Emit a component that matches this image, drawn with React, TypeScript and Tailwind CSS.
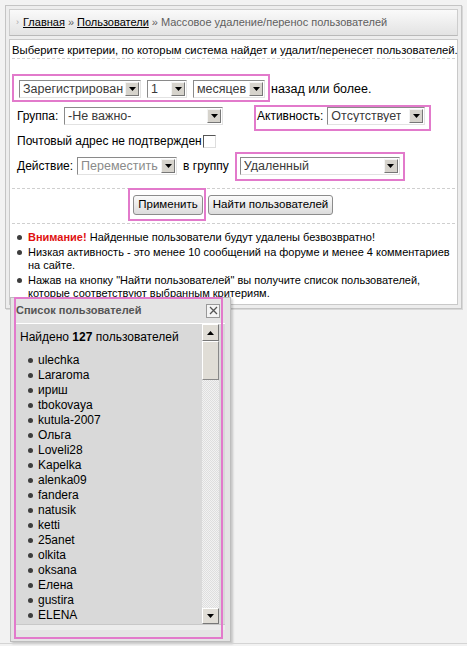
import React from 'react';

const users = [
  'ulechka', 'Lararoma', 'ириш', 'tbokovaya', 'kutula-2007', 'Ольга', 'Loveli28', 'Kapelka',
  'alenka09', 'fandera', 'natusik', 'ketti', '25anet', 'olkita', 'oksana', 'Елена', 'gustira',
  'ELENA', 'Murochka',
];

const font = { fontFamily: '"Liberation Sans", Arial, sans-serif' };

function Arrow({ up = false }: { up?: boolean }) {
  return (
    <svg width="7" height="4" viewBox="0 0 7 4">
      {up ? <path d="M0 4 L3.5 0 L7 4 Z" fill="#000" /> : <path d="M0 0 L7 0 L3.5 4 Z" fill="#000" />}
    </svg>
  );
}

function DropButton() {
  return (
    <div className="flex h-[14px] w-[14px] shrink-0 items-center justify-center border border-t-[#f4f4f4] border-l-[#f4f4f4] border-r-[#777] border-b-[#777] bg-[#d6d3cc]">
      <Arrow />
    </div>
  );
}

function Select({ value, className, muted = false }: { value: string; className: string; muted?: boolean }) {
  return (
    <div
      className={`flex h-[18px] shrink-0 items-center justify-between border border-t-[#8a8a8a] border-l-[#8a8a8a] border-r-[#e2e2e2] border-b-[#e2e2e2] bg-white pl-[3px] pr-[1px] text-[12.5px] ${muted ? 'text-[#8a8a8a]' : 'text-[#3a3a3a]'} ${className}`}
    >
      <span className="truncate leading-none">{value}</span>
      <DropButton />
    </div>
  );
}

function Button({ children, className }: { children: React.ReactNode; className: string }) {
  return (
    <button
      className={`flex h-[20px] shrink-0 items-center justify-center rounded-[3px] border border-[#8c8c8c] bg-gradient-to-b from-[#fbfbfb] to-[#dcdcdc] text-[11.5px] text-black ${className}`}
    >
      {children}
    </button>
  );
}

function Dashed() {
  return <div className="mx-[1px] border-t border-dashed border-[#cfcfcf]" />;
}

function Dot({ className }: { className: string }) {
  return <span className={`inline-block h-[5px] w-[5px] shrink-0 rounded-full bg-[#3d3d3d] ${className}`} />;
}

export default function App() {
  return (
    <div className="relative h-[646px] w-[467px] overflow-hidden bg-[#f2f2f2] text-black" style={font}>
      {/* outer frame */}
      <div className="mx-[5px] mt-[5px] border border-[#c4c4c4] bg-[#ededed] p-[3px] shadow-[1px_1px_0_#d8d8d8]">
        {/* breadcrumb */}
        <div className="flex h-[27px] items-center whitespace-nowrap border border-[#cdcdcd] border-b-[#b9b9b9] bg-gradient-to-b from-[#fafafa] to-[#e3e3e3] pl-[6px] text-[11px] text-[#606060]">
          <span className="mr-[4px] text-[9px] text-[#aaa]">›</span>
          <span className="text-black underline">Главная</span>
          <span className="mx-[3px]">»</span>
          <span className="text-black underline">Пользователи</span>
          <span className="mx-[3px]">»</span>
          <span>Массовое удаление/перенос пользователей</span>
        </div>

        {/* content */}
        <div className="mt-[3px] h-[266px] border border-[#c9c9c9] bg-white px-[1px]">
          <div className="whitespace-nowrap pl-[1px] pt-[4px] text-[11.3px] leading-[13px]">
            Выберите критерии, по которым система найдет и удалит/перенесет пользователей.
          </div>
          <div className="mt-[1px]">
            <Dashed />
          </div>

          <div className="flex flex-col whitespace-nowrap pl-[6px] text-[12px]">
            {/* row 1 */}
            <div className="mt-[21px] flex h-[18px] items-center">
              <div className="relative flex items-center gap-[6px] pl-[2px]">
                <div className="pointer-events-none absolute -bottom-[4px] -left-[5px] -right-[5px] -top-[6px] border-2 border-[#e27acb]" />
                <Select value="Зарегистрирован" className="w-[122px]" />
                <Select value="1" className="w-[40px]" />
                <Select value="месяцев" className="w-[72px]" />
              </div>
              <span className="ml-[6px] text-[12.5px]">назад или более.</span>
            </div>

            {/* row 2 */}
            <div className="mt-[9px] flex h-[18px] items-center">
              <span className="w-[47px]">Группа:</span>
              <Select value="-Не важно-" className="w-[159px]" />
              <div className="relative ml-[34px] flex items-center">
                <div className="pointer-events-none absolute -bottom-[6px] -left-[3px] -right-[6px] -top-[2px] border-2 border-[#e27acb]" />
                <span className="mr-[4px]">Активность:</span>
                <Select value="Отсутствует" className="w-[98px]" />
              </div>
            </div>

            {/* row 3 */}
            <div className="mt-[7px] flex h-[18px] items-center">
              <span>Почтовый адрес не подтвержден</span>
              <span className="ml-[1px] inline-block h-[13px] w-[13px] border border-t-[#555] border-l-[#555] border-r-[#ddd] border-b-[#ddd] bg-white" />
            </div>

            {/* row 4 */}
            <div className="mt-[7px] flex h-[18px] items-center">
              <span className="mr-[4px]">Действие:</span>
              <Select value="Переместить" className="w-[100px]" muted />
              <span className="ml-[6px] mr-[11px]">в группу</span>
              <div className="relative flex items-center">
                <div className="pointer-events-none absolute -bottom-[6px] -left-[5px] -right-[5px] -top-[5px] border-2 border-[#e27acb]" />
                <Select value="Удаленный" className="w-[160px]" />
              </div>
            </div>
          </div>

          <div className="mt-[13px]">
            <Dashed />
          </div>

          {/* buttons */}
          <div className="mt-[6px] flex h-[20px] items-center gap-[5px] pl-[122px]">
            <div className="relative">
              <div className="pointer-events-none absolute -bottom-[6px] -left-[5px] -right-[3px] -top-[7px] border-2 border-[#e27acb]" />
              <Button className="w-[70px]">Применить</Button>
            </div>
            <Button className="w-[125px]">Найти пользователей</Button>
          </div>

          <div className="mt-[8px]">
            <Dashed />
          </div>

          {/* notes */}
          <ul className="mt-[7px] flex flex-col gap-[2px] pl-[6px] text-[11px] leading-[13px]">
            <li className="flex">
              <Dot className="mr-[6px] mt-[4px]" />
              <span>
                <b className="text-[#e01010]">Внимание!</b> Найденные пользователи будут удалены безвозвратно!
              </span>
            </li>
            <li className="flex">
              <Dot className="mr-[6px] mt-[4px]" />
              <span>Низкая активность - это менее 10 сообщений на форуме и менее 4 комментариев на сайте.</span>
            </li>
            <li className="flex">
              <Dot className="mr-[6px] mt-[4px]" />
              <span>Нажав на кнопку "Найти пользователей" вы получите список пользователей, которые соответствуют выбранным критериям.</span>
            </li>
          </ul>
        </div>
      </div>

      {/* users popup */}
      <div className="absolute left-[10px] top-[297px] h-[345px] w-[221px] border border-[#bdbdbd] bg-[#e4e4e4] shadow-[2px_2px_2px_rgba(0,0,0,0.18)]">
        <div className="pointer-events-none absolute -top-[1px] bottom-[2px] left-[3px] right-[7px] z-10 border-2 border-[#e27acb]" />
        <div className="flex h-[25px] items-center justify-between pl-[5px] pr-[10px]">
          <span className="text-[11px] font-bold text-[#555]">Список пользователей</span>
          <span className="flex h-[14px] w-[14px] items-center justify-center border border-[#999] bg-[#f4f4f4]">
            <svg width="9" height="9" viewBox="0 0 9 9">
              <path d="M1 1 L8 8 M8 1 L1 8" stroke="#555" strokeWidth="1.3" />
            </svg>
          </span>
        </div>
        <div className="mx-[5px] h-[306px] border-t border-white bg-[#d9d9d9]">
          <div className="flex h-[300px]">
            <div className="flex-1 overflow-hidden pl-[4px]">
              <div className="mt-[4px] text-[12px]">
                Найдено <b>127</b> пользователей
              </div>
              <ul className="mt-[7px] flex flex-col text-[12px] leading-[15px]">
                {users.map((u) => (
                  <li key={u} className="flex items-center">
                    <Dot className="ml-[8px] mr-[5px]" />
                    <span>{u}</span>
                  </li>
                ))}
              </ul>
            </div>
            <div className="mr-[6px] flex w-[17px] flex-col bg-[repeating-conic-gradient(#f2f2f2_0_25%,#dedede_0_50%)] bg-[length:2px_2px]">
              <div className="flex h-[17px] items-center justify-center border border-t-[#fff] border-l-[#fff] border-r-[#777] border-b-[#777] bg-[#e0ddd6]">
                <Arrow up />
              </div>
              <div className="h-[39px] border border-t-[#fff] border-l-[#fff] border-r-[#888] border-b-[#888] bg-[#e0ddd6]" />
              <div className="flex-1" />
              <div className="flex h-[16px] items-center justify-center border border-t-[#fff] border-l-[#fff] border-r-[#777] border-b-[#777] bg-[#e0ddd6]">
                <Arrow />
              </div>
            </div>
          </div>
          <div className="h-[6px] border-t border-[#c8c8c8] bg-[#ececec]" />
        </div>
      </div>

      <div className="absolute bottom-[2px] left-0 right-0 border-t border-[#d4d4d4]" />
    </div>
  );
}
